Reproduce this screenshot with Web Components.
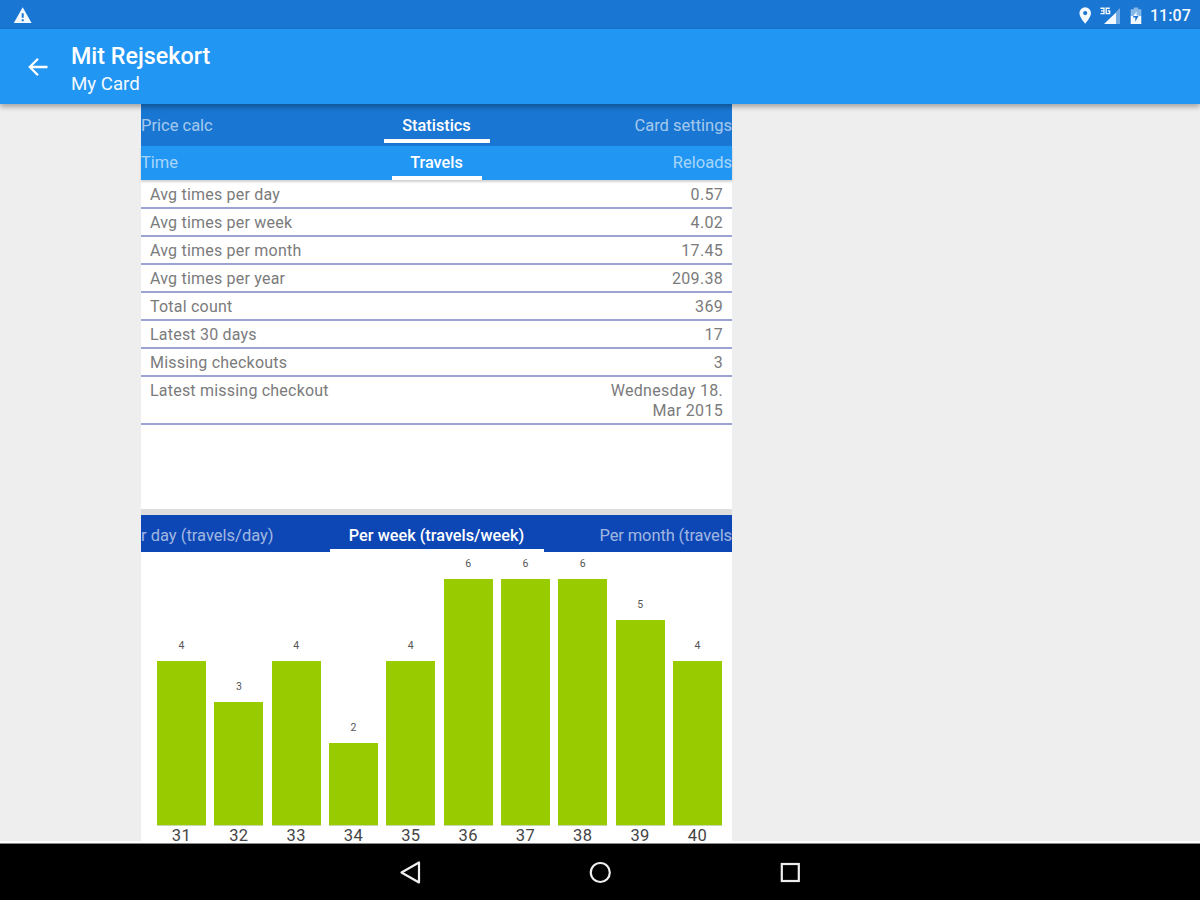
<!DOCTYPE html>
<html lang="en">
<head>
<meta charset="utf-8">
<title>Mit Rejsekort</title>
<style>
  body {
    margin: 0;
    width: 1200px;
    height: 900px;
    overflow: hidden;
    background: #eeeeee;
    font-family: Roboto, 'Liberation Sans', sans-serif;
  }
</style>
</head>
<body>
<travel-app></travel-app>
<script>
'use strict';

class StatusBar extends HTMLElement {
  constructor() {
    super();
    this.attachShadow({ mode: 'open' });
  }
  connectedCallback() {
    this.shadowRoot.innerHTML = `
      <style>
        :host {
          display: flex;
          align-items: center;
          box-sizing: border-box;
          height: 29px;
          padding: 2px 9px 0 13px;
          background: #1976d2;
          color: #f4f9fe;
        }
        svg { display: block; fill: currentColor; }
        .warn { margin-right: auto; }
        .pin { margin-right: 8px; }
        .signal { margin-right: 9px; }
        .battery { margin-right: 8px; }
        span { font-size: 16px; font-weight: 500; letter-spacing: 0.1px; line-height: 20px; padding-top: 1px; }
      </style>
      <svg class="warn" width="20" height="18" viewBox="0 0 20 18">
        <path fill-rule="evenodd" d="M9.7 0.3 L18.6 16 H0.8 Z M8.7 6.2 V10.7 H10.7 V6.2 Z M8.7 12.3 V14.2 H10.7 V12.3 Z"/>
      </svg>
      <svg class="pin" width="13" height="18" viewBox="0 0 13 18">
        <path fill-rule="evenodd" d="M6.2 0.3 A5.8 5.8 0 0 0 0.4 6.1 C0.4 10.3 6.2 16.8 6.2 16.8 S12 10.3 12 6.1 A5.8 5.8 0 0 0 6.2 0.3 Z M6.2 4 A2.1 2.1 0 1 1 6.2 8.2 A2.1 2.1 0 1 1 6.2 4 Z"/>
      </svg>
      <svg class="signal" width="21" height="18" viewBox="0 0 21 18">
        <path opacity="0.4" d="M20 1 V17 H16 V5 Z"/>
        <path d="M16 5.5 V17 H4 Z"/>
        <path d="M0.5 1.2 H4 V6.6 H0.5 M1 3.9 H4 M9.8 1.2 H6.2 V6.6 H9.6 V4 H7.8" fill="none" stroke="currentColor" stroke-width="1.4"/>
      </svg>
      <svg class="battery" width="12" height="18" viewBox="0 0 12 18">
        <path opacity="0.5" d="M3.8 0.5 H8.2 V2.2 H11.3 V9 H0.7 V2.2 H3.8 Z"/>
        <path fill-rule="evenodd" d="M0.7 9 H3.4 L6.6 4.5 V8.5 H8.8 L8.5 9 H11.3 V17 H0.7 Z M5.3 10.6 V14.7 L8.5 9 H3.4 L2.9 10.6 Z"/>
      </svg>
      <span>11:07</span>
    `;
  }
}
customElements.define('status-bar', StatusBar);

class AppBar extends HTMLElement {
  constructor() {
    super();
    this.attachShadow({ mode: 'open' });
  }
  connectedCallback() {
    this.shadowRoot.innerHTML = `
      <style>
        :host {
          display: flex;
          align-items: center;
          box-sizing: border-box;
          height: 75px;
          padding-left: 27px;
          gap: 22px;
          background: #2196f3;
          color: white;
          box-shadow: 0 3px 5px rgba(0, 0, 0, 0.3);
          z-index: 2;
        }
        svg { display: block; }
        .text { padding-top: 7px; }
        .title { font-size: 23.3px; font-weight: 500; line-height: 28px; }
        .sub { font-size: 18.7px; line-height: 28px; opacity: 0.95; }
      </style>
      <svg width="22" height="22" viewBox="0 0 22 22" fill="none" stroke="currentColor" stroke-width="2.3">
        <path d="M11 2.7 L2.8 11 L11 19.3 M2.8 11 H20.5"/>
      </svg>
      <div class="text">
        <div class="title"><slot name="title"></slot></div>
        <div class="sub"><slot name="subtitle"></slot></div>
      </div>
    `;
  }
}
customElements.define('app-bar', AppBar);

class TabStrip extends HTMLElement {
  constructor() {
    super();
    this.attachShadow({ mode: 'open' });
  }
  connectedCallback() {
    this.shadowRoot.innerHTML = `
      <style>
        :host {
          display: grid;
          grid-template-columns: minmax(0, 1fr) var(--marker) minmax(0, 1fr);
          flex: none;
          box-sizing: border-box;
          color: white;
          font-size: 16.3px;
          font-weight: 500;
          white-space: nowrap;
        }
        div { display: flex; line-height: 20px; padding-top: var(--top); }
        .side { color: rgba(255, 255, 255, 0.62); font-weight: 400; font-size: 16.5px; }
        .before { justify-content: flex-start; }
        .after { justify-content: flex-end; letter-spacing: var(--after-spacing, 0); }
        .active { justify-content: center; border-bottom: var(--line, 4px) solid white; }
      </style>
      <div class="side before"><slot name="before"></slot></div>
      <div class="active"><slot></slot></div>
      <div class="side after"><slot name="after"></slot></div>
    `;
  }
}
customElements.define('tab-strip', TabStrip);

class StatRow extends HTMLElement {
  constructor() {
    super();
    this.attachShadow({ mode: 'open' });
  }
  connectedCallback() {
    this.shadowRoot.innerHTML = `
      <style>
        :host {
          display: flex;
          justify-content: space-between;
          padding: 4px 9px 2.6px;
          border-bottom: 2px solid #9aa3d3;
          color: #7b7b7b;
          font-size: 16px;
          line-height: 19.5px;
          letter-spacing: 0.21px;
        }
        .value { max-width: 118px; text-align: right; letter-spacing: 0.3px; }
      </style>
      <span>${this.getAttribute('label')}</span>
      <span class="value">${this.getAttribute('value')}</span>
    `;
  }
}
customElements.define('stat-row', StatRow);

class BarChart extends HTMLElement {
  constructor() {
    super();
    this.attachShadow({ mode: 'open' });
  }
  connectedCallback() {
    const bars = this.getAttribute('data').split(',').map((item) => {
      const [week, count] = item.split(':');
      return `
        <div class="col">
          <span class="count">${count}</span>
          <div class="bar" style="height: ${count * 41}px"></div>
          <span class="week">${week}</span>
        </div>`;
    });
    this.shadowRoot.innerHTML = `
      <style>
        :host {
          display: grid;
          grid-template-columns: repeat(10, 49px);
          justify-content: space-between;
          align-items: end;
          flex: 1;
          padding: 0 10px 0 16px;
        }
        .col { display: flex; flex-direction: column; align-items: center; }
        .count { font-size: 10.5px; line-height: 14px; margin-bottom: 8px; color: #555; }
        .bar {
          width: 49px;
          background: #99cc00;
          box-shadow: 0 1px 0 #c8d8a8;
        }
        .week { font-size: 16.5px; line-height: 14px; letter-spacing: 0.4px; margin-top: 4px; color: #444; }
      </style>
      ${bars.join('')}
    `;
  }
}
customElements.define('bar-chart', BarChart);

class NavBar extends HTMLElement {
  constructor() {
    super();
    this.attachShadow({ mode: 'open' });
  }
  connectedCallback() {
    this.shadowRoot.innerHTML = `
      <style>
        :host {
          display: flex;
          justify-content: center;
          align-items: center;
          box-sizing: border-box;
          height: 57px;
          gap: 166px;
          background: #000;
          border-top: 1px solid #8a8a8a;
          box-shadow: 0 -2px 0 white;
        }
        svg { display: block; fill: none; stroke: #eee; stroke-width: 2.2; }
      </style>
      <svg width="24" height="24" viewBox="0 0 24 24"><path stroke-linejoin="round" d="M21 2.5 V22.5 L3.5 12.5 Z"/></svg>
      <svg width="24" height="24" viewBox="0 0 24 24"><circle cx="12.3" cy="12.5" r="9.5"/></svg>
      <svg width="24" height="24" viewBox="0 0 24 24"><rect x="3.8" y="4" width="17" height="17"/></svg>
    `;
  }
}
customElements.define('nav-bar', NavBar);

class TravelApp extends HTMLElement {
  constructor() {
    super();
    this.attachShadow({ mode: 'open' });
  }
  connectedCallback() {
    this.shadowRoot.innerHTML = `
      <style>
        :host {
          display: grid;
          grid-template-rows: 29px 75px 739px 57px;
          height: 900px;
        }
        main {
          display: flex;
          flex-direction: column;
          width: 591px;
          margin-left: 141px;
          background: white;
        }
        .pages { height: 42px; background: #1976d2; --marker: 106px; --top: 12px; padding-bottom: 3px; }
        .kinds {
          height: 34px;
          background: #2196f3;
          box-shadow: 0 2px 2px rgba(0, 0, 0, 0.18);
          --marker: 90px;
          --top: 7px;
        }
        .periods {
          height: 37px;
          background: #0d47b5;
          --marker: 214px;
          --top: 11px;
          --line: 3px;
          --after-spacing: -0.12px;
        }
        .rows { height: 328px; padding-top: 0.8px; }
        .split { height: 6px; background: #dedcdd; }
      </style>
      <status-bar></status-bar>
      <app-bar>
        <span slot="title">Mit Rejsekort</span>
        <span slot="subtitle">My Card</span>
      </app-bar>
      <main>
        <tab-strip class="pages">
          <span slot="before">Price calc</span>
          Statistics
          <span slot="after">Card settings</span>
        </tab-strip>
        <tab-strip class="kinds">
          <span slot="before">Time</span>
          Travels
          <span slot="after">Reloads</span>
        </tab-strip>
        <div class="rows">
          <stat-row label="Avg times per day" value="0.57"></stat-row>
          <stat-row label="Avg times per week" value="4.02"></stat-row>
          <stat-row label="Avg times per month" value="17.45"></stat-row>
          <stat-row label="Avg times per year" value="209.38"></stat-row>
          <stat-row label="Total count" value="369"></stat-row>
          <stat-row label="Latest 30 days" value="17"></stat-row>
          <stat-row label="Missing checkouts" value="3"></stat-row>
          <stat-row label="Latest missing checkout" value="Wednesday 18. Mar 2015"></stat-row>
        </div>
        <div class="split"></div>
        <tab-strip class="periods">
          <span slot="before">r day (travels/day)</span>
          Per week (travels/week)
          <span slot="after">Per month (travels</span>
        </tab-strip>
        <bar-chart data="31:4,32:3,33:4,34:2,35:4,36:6,37:6,38:6,39:5,40:4"></bar-chart>
      </main>
      <nav-bar></nav-bar>
    `;
  }
}
customElements.define('travel-app', TravelApp);
</script>
</body>
</html>
